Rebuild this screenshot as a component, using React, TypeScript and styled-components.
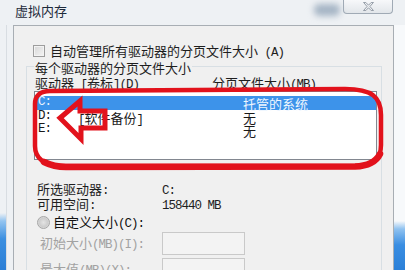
import React from 'react'
import styled, { createGlobalStyle } from 'styled-components'

const CJK = '"Noto Sans CJK SC", "Noto Sans", sans-serif'
const MONO = '"Liberation Mono", "DejaVu Sans Mono", monospace'

const GlobalStyle = createGlobalStyle`
  html, body {
    margin: 0;
    padding: 0;
    background: #ffffff;
  }
  body {
    width: 405px;
    height: 270px;
    overflow: hidden;
  }
`

const Window = styled.div`
  position: relative;
  width: 405px;
  height: 270px;
  overflow: hidden;
  display: flex;
  flex-direction: column;
  background: #eef1f4;
  font-family: ${CJK};
`

const TitleBar = styled.div`
  height: 25px;
  flex: none;
  display: flex;
  align-items: flex-start;
  padding: 0 12px 0 15px;
  box-sizing: border-box;
`

const Title = styled.div`
  margin-top: 4px;
  font-size: 13px;
  line-height: 14px;
  color: #1d2a3a;
`

const Spacer = styled.div`
  flex: 1;
`

const Haze = styled.div`
  width: 26px;
  height: 12px;
  margin: 4px 3px 0 0;
  border-radius: 5px;
  background: #a6b5c5;
  filter: blur(3px);
`

const CloseButton = styled.div`
  width: 50px;
  height: 14px;
  box-sizing: border-box;
  border: 1px solid #a0aab5;
  border-top: none;
  border-radius: 0 0 4px 4px;
  background: linear-gradient(#f7f8fa, #e2e6ea);
  display: flex;
  align-items: center;
  justify-content: center;
`

const FrameRow = styled.div`
  flex: 1;
  min-height: 0;
  display: flex;
`

const LeftFrame = styled.div`
  width: 13px;
  flex: none;
  display: flex;
`

const LeftGlass = styled.div`
  width: 6px;
  border-right: 1px solid #d8dde2;
  background: linear-gradient(
    to bottom,
    transparent 0,
    transparent 188px,
    #93c4f0 196px,
    #3b8fe0 214px,
    #2a7ed6 245px
  );
`

const RightFrame = styled.div`
  flex: 1;
  background: linear-gradient(
    to bottom,
    #f7f9fb 0,
    #f7f9fb 196px,
    #8fc2f0 204px,
    #3a8ee2 220px,
    #2b80d8 245px
  );
`

const Client = styled.div`
  width: 381px;
  flex: none;
  box-sizing: border-box;
  border: 1px solid #a8aeb4;
  border-bottom: none;
  background: #f0f0f0;
  display: flex;
  flex-direction: column;
  color: #1e1e1e;
`

// SimSun-like half-width Latin: 6.5px advance
const Latin = styled.span`
  font-family: ${MONO};
  font-size: 12.5px;
  letter-spacing: -1px;
  white-space: pre;
`

const Han = styled.span`
  font-family: ${CJK};
  font-size: 13px;
`

const T: React.FC<{ children: string }> = ({ children }) => {
  const parts = children.split(/([\x00-\x7f]+)/).filter(Boolean)
  return (
    <>
      {parts.map((p, i) =>
        /^[\x00-\x7f]+$/.test(p) ? <Latin key={i}>{p}</Latin> : <Han key={i}>{p}</Han>
      )}
    </>
  )
}

const CheckRow = styled.div`
  margin: 19px 0 0 19px;
  height: 12px;
  line-height: 12px;
  display: flex;
  align-items: center;
  gap: 5px;
`

const CheckBox = styled.div`
  width: 12px;
  height: 12px;
  box-sizing: border-box;
  border: 1px solid #9d9d9d;
  background: linear-gradient(135deg, #d6d6d6, #f5f5f5);
  box-shadow: inset 0 0 0 1px #f3f3f3;
`

const GroupBox = styled.div`
  margin: 9px 11px 0 12px;
  border: 1px solid #d8dfe4;
  border-bottom: none;
  flex: 1;
  display: flex;
  flex-direction: column;
`

const Legend = styled.div`
  margin: -7px 0 0 7px;
  padding: 0 1px;
  width: fit-content;
  height: 13px;
  line-height: 13px;
  background: #f0f0f0;
`

const Header = styled.div`
  margin-top: 2px;
  padding-left: 8px;
  height: 13px;
  line-height: 13px;
  display: grid;
  grid-template-columns: 177px 1fr;
`

const ListBox = styled.div`
  margin: 3px 4px 0 7px;
  height: 69px;
  box-sizing: border-box;
  border: 1px solid #828790;
  background: #ffffff;
  padding-top: 4px;
`

const ListRow = styled.div<{ $selected?: boolean }>`
  height: 13.5px;
  line-height: 13px;
  padding-left: 3px;
  display: grid;
  grid-template-columns: 40px 165px 1fr;
  background: ${({ $selected }) => ($selected ? '#3d93ea' : 'transparent')};
  color: ${({ $selected }) => ($selected ? '#eef6ff' : '#1a1a1a')};
`

const InfoRow = styled.div<{ $gap: number }>`
  margin-top: ${({ $gap }) => $gap}px;
  padding-left: 10px;
  height: 13px;
  line-height: 13px;
  display: grid;
  grid-template-columns: 125px 1fr;
`

const RadioRow = styled.div`
  margin-top: 7px;
  padding-left: 10px;
  height: 13px;
  line-height: 13px;
  display: flex;
  align-items: center;
  gap: 3px;
  color: #111111;
`

const Radio = styled.div`
  width: 13px;
  height: 13px;
  box-sizing: border-box;
  border-radius: 50%;
  border: 1px solid #a6a6a6;
  background: radial-gradient(circle at 50% 50%, #e4e4e4 0, #cdcdcd 55%, #f2f2f2 100%);
`

const SizeRow = styled.div`
  margin-top: 3px;
  padding-left: 13px;
  height: 23px;
  display: grid;
  grid-template-columns: 122px 83px;
  align-items: center;
  line-height: 13px;
  color: #a2a2a2;
`

const SizeInput = styled.div`
  height: 23px;
  box-sizing: border-box;
  border: 1px solid #c9c9c9;
  background: #f3f3f3;
`

const Markup = styled.svg`
  position: absolute;
  left: 0;
  top: 0;
  pointer-events: none;
`

const RED = '#e2121c'

export default function App() {
  return (
    <>
      <GlobalStyle />
      <Window>
        <TitleBar>
          <Title>虚拟内存</Title>
          <Spacer />
          <Haze />
          <CloseButton>
            <svg width="11" height="9" viewBox="0 0 12 10">
              <polygon
                points="0.5,0.5 3,0.5 6,3.6 9,0.5 11.5,0.5 7.6,5 11.5,9.5 9,9.5 6,6.4 3,9.5 0.5,9.5 4.4,5"
                fill="#eef0f2"
                stroke="#7f8a96"
                strokeWidth="0.9"
              />
            </svg>
          </CloseButton>
        </TitleBar>
        <FrameRow>
          <LeftFrame>
            <LeftGlass />
          </LeftFrame>
          <Client>
            <CheckRow>
              <CheckBox />
              <span>
                <T>{'自动管理所有驱动器的分页文件大小 (A)'}</T>
              </span>
            </CheckRow>
            <GroupBox>
              <Legend>
                <T>每个驱动器的分页文件大小</T>
              </Legend>
              <Header>
                <span>
                  <T>{'驱动器 [卷标](D)'}</T>
                </span>
                <span>
                  <T>分页文件大小(MB)</T>
                </span>
              </Header>
              <ListBox>
                <ListRow $selected>
                  <T>C:</T>
                  <span />
                  <span>
                    <T>托管的系统</T>
                  </span>
                </ListRow>
                <ListRow>
                  <T>D:</T>
                  <span>
                    <T>[软件备份]</T>
                  </span>
                  <span>
                    <T>无</T>
                  </span>
                </ListRow>
                <ListRow>
                  <T>E:</T>
                  <span />
                  <span>
                    <T>无</T>
                  </span>
                </ListRow>
              </ListBox>
              <InfoRow $gap={21}>
                <span>
                  <T>所选驱动器:</T>
                </span>
                <span>
                  <T>C:</T>
                </span>
              </InfoRow>
              <InfoRow $gap={2}>
                <span>
                  <T>可用空间:</T>
                </span>
                <span>
                  <T>158440 MB</T>
                </span>
              </InfoRow>
              <RadioRow>
                <Radio />
                <span>
                  <T>自定义大小(C):</T>
                </span>
              </RadioRow>
              <SizeRow>
                <span>
                  <T>初始大小(MB)(I):</T>
                </span>
                <SizeInput />
              </SizeRow>
              <SizeRow>
                <span>
                  <T>最大值(MB)(X):</T>
                </span>
                <SizeInput />
              </SizeRow>
            </GroupBox>
          </Client>
          <RightFrame />
        </FrameRow>
        <Markup width={405} height={270} viewBox="0 0 405 270">
          <path
            d="M 50 91 L 345 89 C 372 89 381 97 381 115 L 381 145 C 381 160 372 166 355 166 L 62 166 C 44 166 35 158 35 146 L 35 104 C 35 96 40 91 50 91 Z"
            fill="none"
            stroke={RED}
            strokeWidth={4.5}
            strokeLinejoin="round"
          />
          <path
            d="M 44 162 Q 54 167 66 167 L 355 166.5 C 368 166 376 162 380 154"
            fill="none"
            stroke={RED}
            strokeWidth={6.5}
            strokeLinecap="round"
          />
          <path
            d="M 60 118 L 80 101 L 80 111 L 105 111 L 105 128 L 81 128 L 81 139 Z"
            fill="none"
            stroke={RED}
            strokeWidth={5}
            strokeLinejoin="miter"
          />
        </Markup>
      </Window>
    </>
  )
}
